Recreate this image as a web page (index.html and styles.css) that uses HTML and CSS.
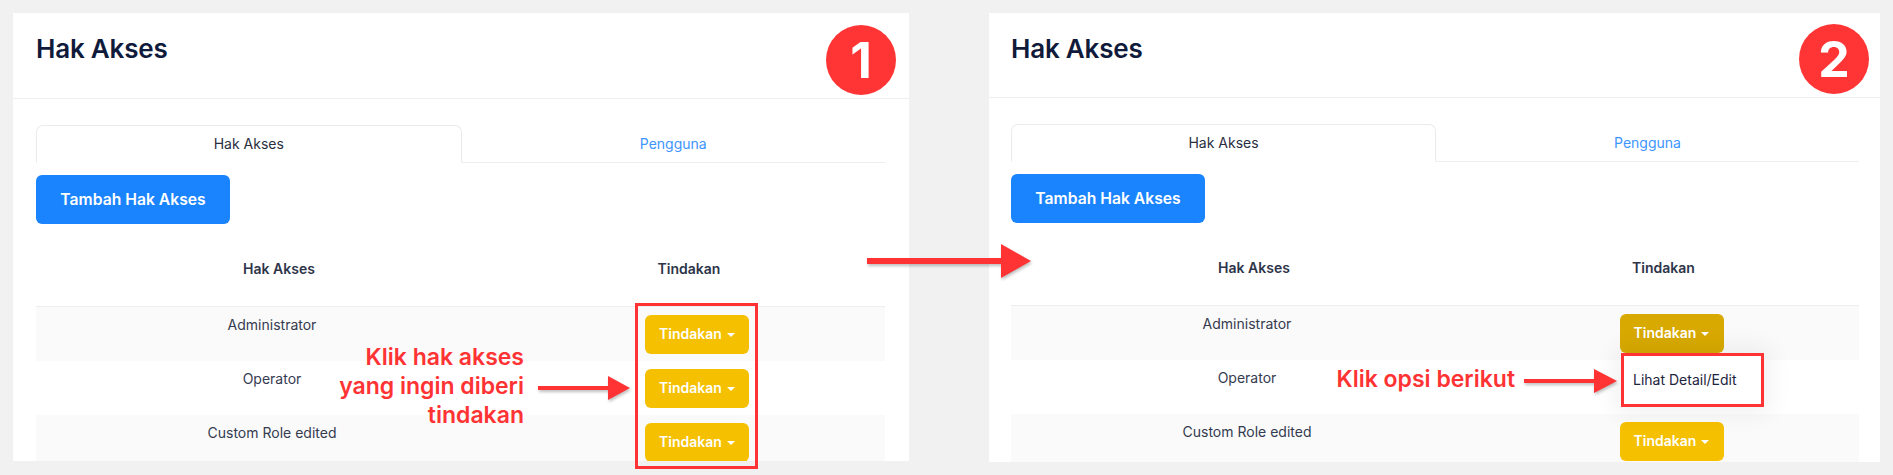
FILE: index.html
```html
<!DOCTYPE html>
<html lang="id">
<head>
<meta charset="utf-8">
<title>Hak Akses</title>
<link rel="stylesheet" href="styles.css">
</head>
<body>
<div class="page">
  <section class="shot">
    <div class="card">
      <header class="card-head"><h1 class="title">Hak Akses</h1></header>
      <div class="card-body">
        <nav class="tabs">
          <div class="tab active">Hak Akses</div>
          <div class="tab link">Pengguna</div>
        </nav>
        <button class="btn-primary">Tambah Hak Akses</button>
        <table class="roles">
          <thead>
            <tr><th class="c-name">Hak Akses</th><th class="c-act">Tindakan</th></tr>
          </thead>
          <tbody>
            <tr class="odd"><td class="c-name">Administrator</td><td class="c-act"><span class="btn-warn">Tindakan<i class="caret"></i></span></td></tr>
            <tr><td class="c-name">Operator</td><td class="c-act"><span class="btn-warn">Tindakan<i class="caret"></i></span></td></tr>
            <tr class="odd"><td class="c-name">Custom Role edited</td><td class="c-act"><span class="btn-warn">Tindakan<i class="caret"></i></span></td></tr>
          </tbody>
        </table>
      </div>
    </div>
    <div class="badge b1">1</div>
    <div class="hl-box hl1"></div>
    <p class="note note1">Klik hak akses<br>yang ingin diberi<br>tindakan</p>
    <svg class="arrow arrow1" width="92" height="24" viewBox="0 0 92 24"><rect x="0" y="10" width="72" height="4" fill="#ff3333"/><polygon points="70,0 92,12 70,24" fill="#ff3333"/></svg>
  </section>

  <svg class="arrow big-arrow" width="168" height="40" viewBox="0 0 168 40"><rect x="0" y="16" width="138" height="6" fill="#ff3333"/><polygon points="134,2 164,19 134,36" fill="#ff3333"/></svg>

  <section class="shot">
    <div class="card card-b">
      <header class="card-head"><h1 class="title">Hak Akses</h1></header>
      <div class="card-body">
        <nav class="tabs">
          <div class="tab active">Hak Akses</div>
          <div class="tab link">Pengguna</div>
        </nav>
        <button class="btn-primary">Tambah Hak Akses</button>
        <table class="roles">
          <thead>
            <tr><th class="c-name">Hak Akses</th><th class="c-act">Tindakan</th></tr>
          </thead>
          <tbody>
            <tr class="odd"><td class="c-name">Administrator</td><td class="c-act"><span class="btn-warn pressed">Tindakan<i class="caret"></i></span></td></tr>
            <tr><td class="c-name">Operator</td><td class="c-act"></td></tr>
            <tr class="odd"><td class="c-name">Custom Role edited</td><td class="c-act"><span class="btn-warn">Tindakan<i class="caret"></i></span></td></tr>
          </tbody>
        </table>
      </div>
    </div>
    <div class="badge b2">2</div>
    <div class="menu">Lihat Detail/Edit</div>
    <p class="note note2">Klik opsi berikut</p>
    <svg class="arrow arrow2" width="93" height="24" viewBox="0 0 93 24"><rect x="0" y="10" width="73" height="4" fill="#ff3333"/><polygon points="70,0 93,12 70,24" fill="#ff3333"/></svg>
  </section>
</div>
</body>
</html>
```
FILE: styles.css
```css
* { box-sizing: border-box; }
html, body {
  margin: 0;
  padding: 0;
  width: 1893px;
  height: 475px;
  overflow: hidden;
  background: #f1f1f1;
  font-family: Inter, "Noto Sans", "Liberation Sans", sans-serif;
}
.page {
  position: relative;
  display: flex;
  gap: 80px;
  padding: 13px 0 0 13px;
}
.shot { position: relative; flex-shrink: 0; }
.card {
  width: 896px;
  height: 448px;
  background: #ffffff;
  overflow: hidden;
  display: flex;
  flex-direction: column;
}
.card-b { width: 891px; height: 449px; }
.card-head {
  flex-shrink: 0;
  height: 86px;
  padding: 20px 23px 0;
  border-bottom: 1px solid #efefef;
}
.card-b .card-head { height: 85px; padding-left: 22px; }
.title {
  margin: 0;
  font-size: 26px;
  line-height: 32px;
  font-weight: 600;
  color: #101a3b;
  letter-spacing: -0.2px;
}
.card-body {
  flex-shrink: 0;
  padding: 26px 24px 0 23px;
}
.card-b .card-body { padding: 26px 21px 0 22px; }
.tabs {
  display: flex;
  height: 38px;
  border-bottom: 1px solid #eceef1;
}
.tab {
  flex: 1;
  text-align: center;
  font-size: 14px;
  line-height: 37px;
  color: #2a2f3f;
}
.tab.active {
  border: 1px solid #e9ebee;
  border-bottom-color: #ffffff;
  border-radius: 7px 7px 0 0;
  margin-bottom: -1px;
  line-height: 36px;
}
.tab.link { color: #3d95ff; }
.btn-primary {
  display: block;
  margin-top: 12px;
  height: 49px;
  width: 194px;
  padding: 0;
  border: 0;
  border-radius: 6px;
  background: #1a84ff;
  color: #ffffff;
  font-family: inherit;
  font-size: 15.7px;
  font-weight: 600;
}
.roles {
  width: 100%;
  border-collapse: collapse;
}
.roles th {
  height: 82px;
  padding: 35px 0 0;
  vertical-align: top;
  font-size: 14px;
  line-height: 20px;
  font-weight: 600;
  color: #2d3449;
}
.roles th.c-name { width: 486px; }
.roles th.c-act { padding-right: 29px; }
.roles tbody tr:first-child td { border-top: 1px solid #eeeeee; }
.roles td {
  height: 54px;
  padding: 8px 0 7px;
  vertical-align: top;
  text-align: center;
  font-size: 14px;
  line-height: 20px;
  color: #353b50;
}
.roles td.c-name { padding-right: 14px; }
.roles td.c-act { padding-right: 13px; }
.roles tr.odd td { background: #fafafa; }
.btn-warn {
  display: inline-flex;
  align-items: center;
  justify-content: center;
  gap: 5px;
  width: 104px;
  height: 39px;
  border-radius: 6px;
  background: #f5c000;
  color: #ffffff;
  font-size: 14px;
  font-weight: 600;
}
.btn-warn.pressed { background: #d8a900; }
.caret {
  display: inline-block;
  width: 0;
  height: 0;
  border-left: 4px solid transparent;
  border-right: 4px solid transparent;
  border-top: 4px solid #ffffff;
  margin-top: 1px;
}
.badge {
  position: absolute;
  width: 70px;
  height: 70px;
  border-radius: 50%;
  background: #ff3535;
  color: #ffffff;
  font-size: 50px;
  font-weight: 700;
  line-height: 70px;
  text-align: center;
}
.b1 { left: 813px; top: 12px; }
.b2 { left: 810px; top: 11px; }
.hl-box {
  position: absolute;
  border: 3px solid #ff3333;
}
.hl1 { left: 622px; top: 290px; width: 123px; height: 166px; }
.note {
  position: absolute;
  margin: 0;
  color: #ff3333;
  font-size: 23px;
  line-height: 29px;
  font-weight: 600;
  text-align: right;
  white-space: nowrap;
}
.note1 { right: 385px; top: 330px; }
.note2 { right: 365px; top: 352px; }
.arrow {
  position: absolute;
  filter: drop-shadow(1px 2px 1.5px rgba(0, 0, 0, 0.25));
}
.arrow1 { left: 525px; top: 363px; }
.arrow2 { left: 535px; top: 356px; }
.big-arrow { left: 867px; top: 242px; z-index: 2; }
.menu {
  position: absolute;
  left: 632px;
  top: 340px;
  width: 143px;
  height: 54px;
  padding: 0 0 0 9px;
  background: #ffffff;
  border: 3px solid #ff3333;
  font-size: 14px;
  line-height: 48px;
  color: #1d2440;
  box-shadow: 0 0 24px 6px rgba(0, 0, 0, 0.06);
}
```
